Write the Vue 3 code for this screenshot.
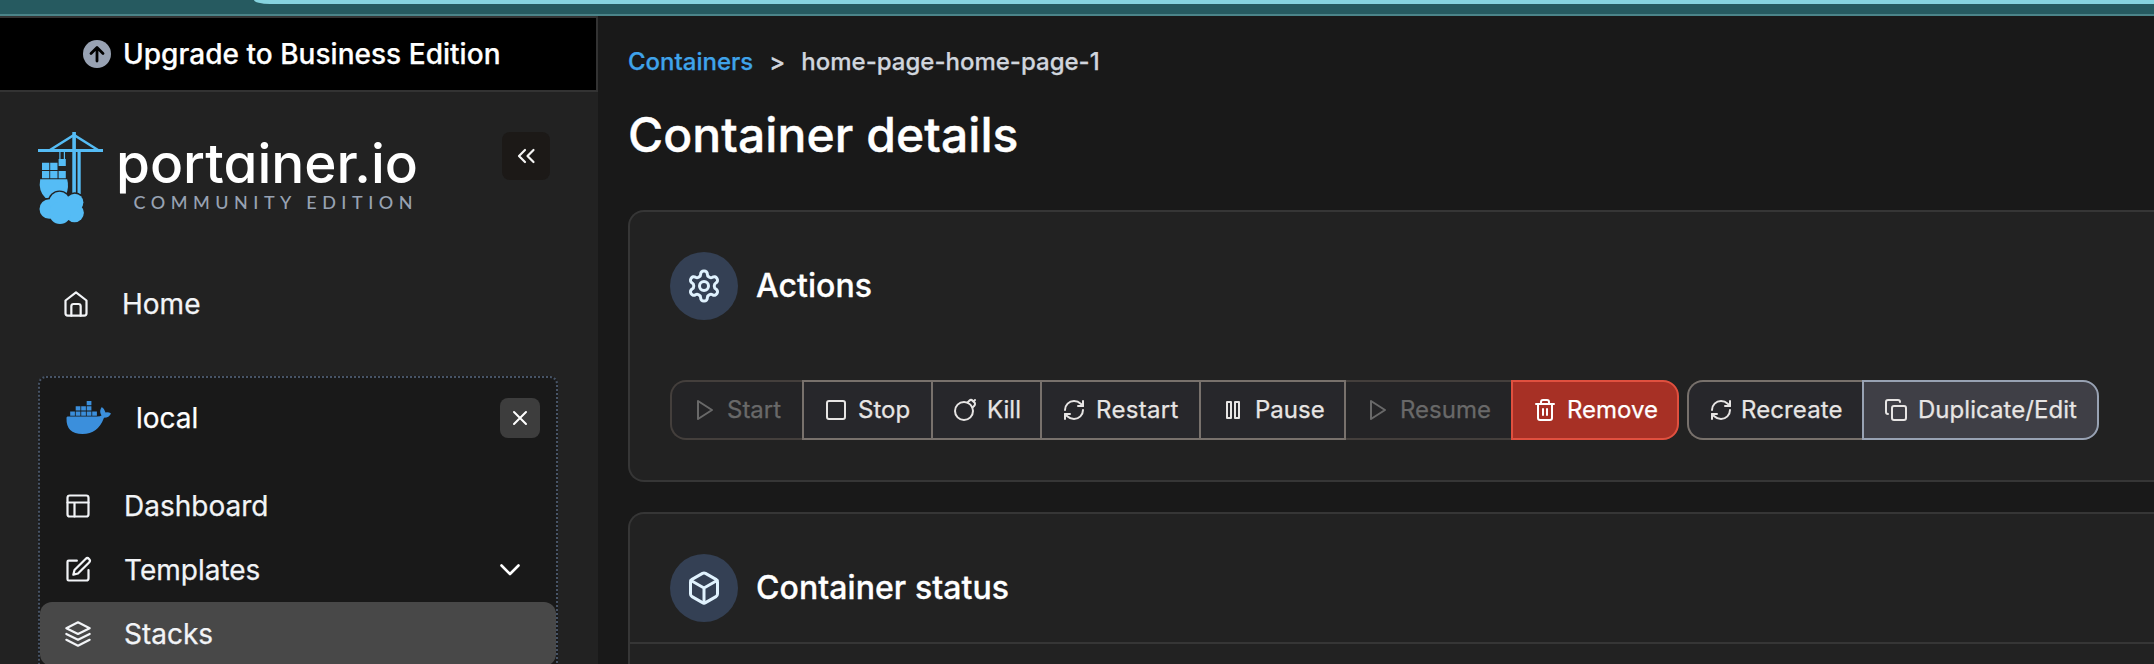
<script setup>
const icons = {
  home: '<path d="m3 9 9-7 9 7v11a2 2 0 0 1-2 2H5a2 2 0 0 1-2-2z"/><path d="M8 22V14a2 2 0 0 1 2-2h4a2 2 0 0 1 2 2v8"/>',
  layout: '<rect x="3" y="3" width="18" height="18" rx="2"/><path d="M3 9h18M9 21V9"/>',
  edit: '<path d="M11 4H4a1 1 0 0 0-1 1v15a1 1 0 0 0 1 1h15a2 2 0 0 0 2-2v-7"/><path d="M18.5 2.5a2.12 2.12 0 0 1 3 3L12 15l-4 1 1-4Z"/>',
  layers: '<path d="m12 2 10 5-10 5L2 7z"/><path d="m2 17 10 5 10-5"/><path d="m2 12 10 5 10-5"/>',
  play: '<path d="m5 3 14 9-14 9V3z"/>',
  square: '<rect x="3" y="3" width="18" height="18" rx="2"/>',
  bomb: '<circle cx="11" cy="13" r="9"/><path d="m14.35 4.65 1.95-1.95a2.41 2.41 0 0 1 3.4 0l1.6 1.6a2.4 2.4 0 0 1 0 3.4l-1.95 1.95"/><path d="m22 2-1.5 1.5"/>',
  refresh: '<path d="M3 12a9 9 0 0 1 9-9 9.75 9.75 0 0 1 6.74 2.74L21 8"/><path d="M21 3v5h-5"/><path d="M21 12a9 9 0 0 1-9 9 9.75 9.75 0 0 1-6.74-2.74L3 16"/><path d="M8 16H3v5"/>',
  pause: '<rect x="6" y="4" width="4" height="16"/><rect x="14" y="4" width="4" height="16"/>',
  trash: '<path d="M3 6h18"/><path d="M19 6v14a2 2 0 0 1-2 2H7a2 2 0 0 1-2-2V6"/><path d="M8 6V4a2 2 0 0 1 2-2h4a2 2 0 0 1 2 2v2"/><path d="M10 11v6M14 11v6"/>',
  copy: '<rect x="8" y="8" width="14" height="14" rx="2"/><path d="M4 16a2 2 0 0 1-2-2V4a2 2 0 0 1 2-2h10a2 2 0 0 1 2 2"/>',
  settings: '<path d="M12.22 2h-.44a2 2 0 0 0-2 2v.18a2 2 0 0 1-1 1.73l-.43.25a2 2 0 0 1-2 0l-.15-.08a2 2 0 0 0-2.73.73l-.22.38a2 2 0 0 0 .73 2.73l.15.1a2 2 0 0 1 1 1.72v.51a2 2 0 0 1-1 1.74l-.15.09a2 2 0 0 0-.73 2.73l.22.38a2 2 0 0 0 2.73.73l.15-.08a2 2 0 0 1 2 0l.43.25a2 2 0 0 1 1 1.73V20a2 2 0 0 0 2 2h.44a2 2 0 0 0 2-2v-.18a2 2 0 0 1 1-1.73l.43-.25a2 2 0 0 1 2 0l.15.08a2 2 0 0 0 2.73-.73l.22-.39a2 2 0 0 0-.73-2.73l-.15-.08a2 2 0 0 1-1-1.74v-.5a2 2 0 0 1 1-1.74l.15-.09a2 2 0 0 0 .73-2.73l-.22-.38a2 2 0 0 0-2.73-.73l-.15.08a2 2 0 0 1-2 0l-.43-.25a2 2 0 0 1-1-1.73V4a2 2 0 0 0-2-2z"/><circle cx="12" cy="12" r="3"/>',
  box: '<path d="M21 8a2 2 0 0 0-1-1.73l-7-4a2 2 0 0 0-2 0l-7 4A2 2 0 0 0 3 8v8a2 2 0 0 0 1 1.73l7 4a2 2 0 0 0 2 0l7-4A2 2 0 0 0 21 16Z"/><path d="m3.3 7 8.7 5 8.7-5M12 22V12"/>',
}
const menu = [
  { label: 'Dashboard', icon: 'layout' },
  { label: 'Templates', icon: 'edit', chevron: true },
  { label: 'Stacks', icon: 'layers', active: true },
]
const cloud = [
  [49.3, 209, 9.8], [59.5, 202, 10.2], [74.8, 202.3, 8.6], [74.5, 212.8, 9.4], [60, 213, 11],
]
const groups = [
  [
    { label: 'Start', icon: 'play', cls: 'w-start disabled' },
    { label: 'Stop', icon: 'square', cls: 'w-stop' },
    { label: 'Kill', icon: 'bomb', cls: 'w-kill' },
    { label: 'Restart', icon: 'refresh', cls: 'w-restart' },
    { label: 'Pause', icon: 'pause', cls: 'w-pause' },
    { label: 'Resume', icon: 'play', cls: 'w-resume disabled' },
    { label: 'Remove', icon: 'trash', cls: 'w-remove danger' },
  ],
  [
    { label: 'Recreate', icon: 'refresh', cls: 'w-recreate' },
    { label: 'Duplicate/Edit', icon: 'copy', cls: 'w-duplicate hovered' },
  ],
]
</script>

<template>
  <div class="page">
    <div class="browser"><div class="omnibar"></div></div>
    <div class="shell">
      <aside class="sidebar">
        <button class="upgrade">
          <svg width="28" height="28" viewBox="0 0 28 28">
            <circle cx="14" cy="14" r="14" fill="#98a2b3" />
            <path d="M14 21V8M8 13.5 14 7.5l6 6" fill="none" stroke="#000" stroke-width="2.8" stroke-linecap="round" stroke-linejoin="round" />
          </svg>
          <span>Upgrade to Business Edition</span>
        </button>
        <div class="brand">
          <svg class="logo" width="382" height="100" viewBox="38 130 382 100">
            <g fill="#55bcf5">
              <path d="M38 149h65v3H38z" />
              <path d="M72.300 132h3.600v61h-3.600zM77.500 152h3.200v42h-3.200zM59.300 152h1.200v7h-1.200zM63.800 152h1.200v7h-1.200z" />
              <path d="M42 162.700h7.300v7.300H42zM50.200 162.700h7.300v7.300h-7.300zM58.600 159h7.200v7h-7.200zM42 171h7.300v7.300H42zM50.200 171h7.300v7.300h-7.300zM58.600 171h7.200v7.300h-7.200z" />
              <path d="M40.200 179.300h27q2 8-1 14.700l-9 4H45.500q-7.500-7-5.300-18.700z" />
            </g>
            <path d="m50 150 24-15 24 15" fill="none" stroke="#55bcf5" stroke-width="2.600" />
            <g fill="#222">
              <circle v-for="(c, i) in cloud" :key="i" :cx="c[0]" :cy="c[1]" :r="c[2] + 1.4" />
            </g>
            <g fill="#55bcf5">
              <circle v-for="(c, i) in cloud" :key="i" :cx="c[0]" :cy="c[1]" :r="c[2]" />
              <path d="M58 200h18v14H58z" />
            </g>
            <text class="wordmark" x="116" y="182.500" textLength="302" lengthAdjust="spacingAndGlyphs">portainer.io</text>
            <text class="edition" x="133.500" y="209" textLength="279">COMMUNITY EDITION</text>
          </svg>
          <button class="collapse">
            <svg width="48" height="48" viewBox="0 0 48 48"><path d="m23 18-6 6 6 6M31.500 18l-6 6 6 6" /></svg>
          </button>
        </div>
        <nav class="home">
          <svg class="icon nav-icon" viewBox="0 0 24 24" v-html="icons.home"></svg>
          <span>Home</span>
        </nav>
        <section class="environment">
          <header class="env-head">
            <svg class="whale" width="46" height="34" viewBox="0 0 46 34" fill="#3b8fdc">
              <path d="M20.700 0h4.700v4.300h-4.700zM9.700 5.200h4.700v4.300H9.700zM15.200 5.200h4.700v4.300h-4.700zM20.700 5.200h4.700v4.300h-4.700zM4.200 10.400h4.700v4.300H4.200zM9.700 10.400h4.700v4.300H9.700zM15.200 10.400h4.700v4.300h-4.700zM20.700 10.400h4.700v4.300h-4.700zM26.200 10.400h4.700v4.300h-4.700z" />
              <path d="M1.500 15.500H31q3.500 0 4.500-1-3-4 .3-8.500 3.400 2.200 3.700 5.500 3-.6 5.500 1-1.800 4.200-7 4.200Q32 33 16.500 33 0 33 .5 17q0-1.500 1-1.500z" />
            </svg>
            <span>local</span>
            <button class="close"><svg width="40" height="40" viewBox="0 0 40 40"><path d="m14 14 12 12M26 14 14 26" /></svg></button>
          </header>
          <div v-for="m in menu" :key="m.label" class="item" :class="{ active: m.active }">
            <svg class="icon nav-icon" viewBox="0 0 24 24" v-html="icons[m.icon]"></svg>
            <span>{{ m.label }}</span>
            <svg v-if="m.chevron" class="chevron" width="20" height="12" viewBox="0 0 20 12"><path d="m1.500 1.500 8.500 8.500 8.500-8.500" /></svg>
          </div>
        </section>
      </aside>
      <main class="main">
        <div class="crumbs"><a>Containers</a><span class="sep">&gt;</span><span class="current">home-page-home-page-1</span></div>
        <h1>Container details</h1>
        <section class="card actions">
          <header class="card-head">
            <span class="badge"><svg class="icon" viewBox="0 0 24 24" v-html="icons.settings"></svg></span>
            <h2>Actions</h2>
          </header>
          <div class="toolbar">
            <div v-for="(g, i) in groups" :key="i" class="group">
              <button v-for="b in g" :key="b.label" class="btn" :class="b.cls">
                <svg class="icon" viewBox="0 0 24 24" v-html="icons[b.icon]"></svg><span>{{ b.label }}</span>
              </button>
            </div>
          </div>
        </section>
        <section class="card status">
          <header class="card-head">
            <span class="badge"><svg class="icon" viewBox="0 0 24 24" v-html="icons.box"></svg></span>
            <h2>Container status</h2>
          </header>
        </section>
      </main>
    </div>
  </div>
</template>

<style>
html, body { margin: 0; background: #191919; overflow: hidden; }
</style>

<style scoped>
* { box-sizing: border-box; }
.page { width: 2154px; height: 664px; overflow: hidden; background: #191919; font-family: Inter, "Liberation Sans", sans-serif; color: #fff; -webkit-text-stroke: 0.25px currentColor; }
button { font: inherit; color: inherit; border: 0; padding: 0; margin: 0; }
svg { display: block; flex: none; }
.icon { fill: none; stroke: currentColor; stroke-width: 2; stroke-linecap: round; stroke-linejoin: round; }
.browser { height: 16px; background: #265a60; border-bottom: 2px solid #4b8489; padding-left: 254px; }
.omnibar { height: 4px; background: #86d3df; border-bottom-left-radius: 24px 6px; }
.shell { display: flex; height: 648px; }
.sidebar { width: 598px; flex: none; background: #222; }
.upgrade { width: 598px; height: 76px; background: #000; border: 2px solid #333; border-left: 0; display: flex; align-items: center; padding-left: 83px; gap: 12px; font-size: 28px; font-weight: 500; letter-spacing: 0.03px; white-space: nowrap; }
.brand { height: 140px; margin-top: 40px; display: flex; padding-left: 38px; }
.logo { margin-top: -2px; }
.wordmark { font-family: Inter, sans-serif; font-size: 54px; font-weight: 500; font-feature-settings: "cv11"; fill: #fff; }
.edition { font-family: Lato, Inter, sans-serif; font-size: 18px; font-weight: 500; fill: #98a2b3; }
.collapse { width: 48px; height: 48px; border-radius: 8px; background: #1c1917; margin-left: 82px; }
.collapse path { fill: none; stroke: #f5f5f4; stroke-width: 2.2; stroke-linecap: round; stroke-linejoin: round; }
.home { height: 64px; display: flex; align-items: center; padding-left: 62px; gap: 32px; font-size: 28px; color: #f2f4f7; }
.nav-icon { width: 28px; height: 28px; stroke-width: 1.9; }
.environment { margin: 40px 0 0 38px; width: 520px; height: 330px; border: 2px dotted #475467; border-radius: 8px; background: #191919; }
.env-head { height: 80px; margin-bottom: 16px; display: flex; align-items: center; padding-left: 26px; font-size: 28px; }
.env-head span { margin-left: 24px; flex: 1; }
.close { width: 40px; height: 40px; border-radius: 8px; background: #3d3d3d; margin-right: 16px; }
.close path { fill: none; stroke: #fff; stroke-width: 2; stroke-linecap: round; }
.item { height: 64px; display: flex; align-items: center; padding-left: 24px; gap: 32px; font-size: 28px; color: #f2f4f7; border-radius: 12px; }
.item.active { background: #484848; }
.chevron { margin: 0 36px 0 auto; }
.chevron path { fill: none; stroke: #fff; stroke-width: 2.6; stroke-linecap: round; stroke-linejoin: round; }
.main { flex: 1; min-width: 0; padding-left: 30px; }
.crumbs { margin-top: 30px; height: 32px; line-height: 32px; font-size: 24px; font-weight: 500; color: #d0d5dd; white-space: nowrap; }
.crumbs a { color: #3fa3ea; }
.sep { margin: 0 16px; }
h1 { margin: 27px 0 0; height: 60px; line-height: 60px; font-size: 48px; font-weight: 500; letter-spacing: 0.08px; -webkit-text-stroke-width: 0.4px; }
.card { border: 2px solid #363636; border-right: 0; border-radius: 16px 0 0 16px; background: #222; }
.actions { height: 272px; margin-top: 45px; }
.status { height: 180px; margin-top: 30px; }
.card-head { height: 130px; padding: 40px 0 0 40px; display: flex; gap: 18px; }
.status .card-head { border-bottom: 2px solid #363636; }
.badge { width: 68px; height: 68px; border-radius: 50%; background: #344054; color: #e0f2fe; display: flex; align-items: center; justify-content: center; }
.badge .icon { width: 36px; height: 36px; }
h2 { margin: 0; line-height: 67px; font-size: 32px; font-weight: 500; letter-spacing: 0.06px; -webkit-text-stroke-width: 0.3px; }
.toolbar { display: flex; gap: 8px; padding: 38px 0 0 40px; }
.group { display: flex; }
.btn { height: 60px; flex: none; border: 2px solid #78716c; border-right-width: 0; background: #27272b; color: #e7e5e4; display: flex; align-items: center; gap: 10px; padding: 0 0 2px 20px; font-size: 24px; white-space: nowrap; }
.btn .icon { width: 24px; height: 24px; position: relative; top: 1px; }
.btn:first-child { border-radius: 16px 0 0 16px; }
.btn:last-child { border-radius: 0 16px 16px 0; border-right-width: 2px; }
.disabled { background: #242426; border-color: #443f3c; color: #696969; }
.danger { background: #a73025; border-color: #e0503f; color: #fff; }
.hovered { background: #3f3f46; border-color: #98a2b3; }
.w-start { width: 132px; padding-left: 21px; }
.w-stop { width: 129px; }
.w-kill { width: 109px; }
.w-restart { width: 159px; letter-spacing: 0.3px; }
.w-pause { width: 147px; border-right-width: 2px; }
.w-resume { width: 165px; border-left-width: 0; padding-left: 20px; }
.w-remove { width: 168px; }
.w-recreate { width: 175px; gap: 8px; letter-spacing: 0.1px; }
.w-duplicate { width: 237px; letter-spacing: 0.05px; }
</style>
